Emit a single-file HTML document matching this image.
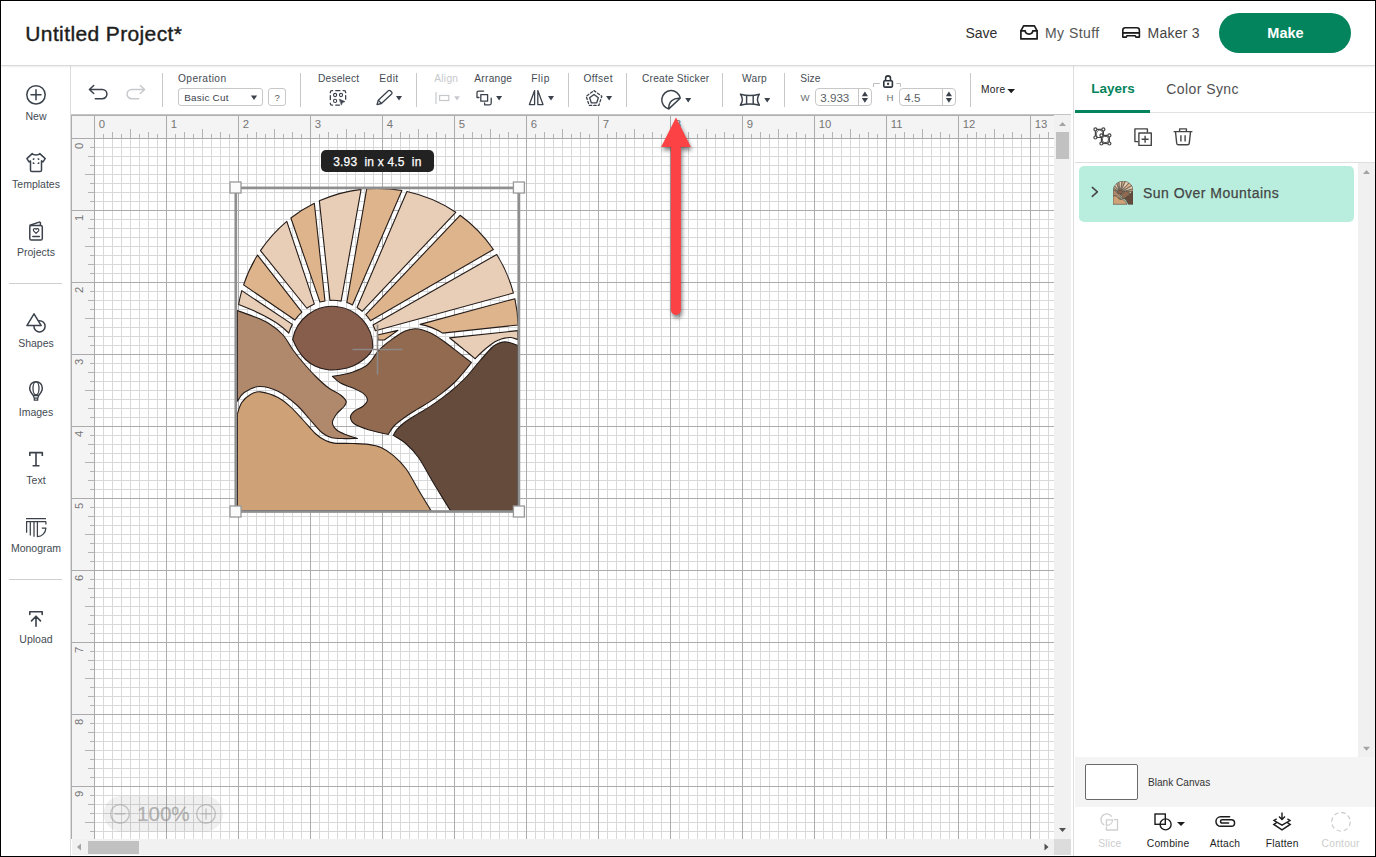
<!DOCTYPE html>
<html><head><meta charset="utf-8"><title>Design Space</title>
<style>
*{box-sizing:border-box;margin:0;padding:0}
html,body{width:1376px;height:857px;overflow:hidden;background:#fff}
body{position:relative;font-family:"Liberation Sans",sans-serif;color:#333}
.abs{position:absolute}
.t{position:absolute;white-space:nowrap;line-height:1;}
#frame{position:absolute;left:0;top:0;width:1376px;height:857px;border:1px solid #000;z-index:50;pointer-events:none}
#header{position:absolute;left:1px;top:1px;width:1374px;height:65px;background:#fff;border-bottom:1px solid #d9d9d9;box-shadow:0 1px 2px rgba(0,0,0,.07);z-index:5}
#side{position:absolute;left:1px;top:66px;width:70px;height:790px;background:#fff;border-right:1px solid #dcdcdc}
#toolbar{position:absolute;left:71px;top:66px;width:1002px;height:48px;background:#fff}
.sep{position:absolute;top:73px;width:1px;height:34px;background:#c9c9c9}
.lbl{font-size:10.5px;color:#444b53}
.dis{color:#c3c6c9}
.box{position:absolute;border:1px solid #c8c8c8;border-radius:3px;background:#fff}
#canvas{position:absolute;left:72px;top:116px;width:982px;height:723px;background-color:#fff;
 background-image:
  linear-gradient(to right,#ababab 1px,transparent 1px),
  linear-gradient(to bottom,#ababab 1px,transparent 1px),
  linear-gradient(to right,#d9d9d9 1px,transparent 1px),
  linear-gradient(to bottom,#d9d9d9 1px,transparent 1px);
 background-size:72px 72px,72px 72px,9px 9px,9px 9px;
 background-position:22px 0,0 22px,4px 0,0 4px;}
#rtop{position:absolute;left:72px;top:116px;width:982px;height:22px;background-color:#f4f4f4;
 background-image:
  linear-gradient(to right,#ababab 1px,transparent 1px),
  linear-gradient(to right,#b4b4b4 1px,transparent 1px),
  linear-gradient(to right,#b4b4b4 1px,transparent 1px),
  linear-gradient(to right,#b4b4b4 1px,transparent 1px);
 background-size:72px 22px,36px 9px,18px 6px,9px 4px;
 background-position:22px 0,22px 13px,4px 16px,4px 18px;
 background-repeat:repeat-x;}
#rleft{position:absolute;left:72px;top:116px;width:22px;height:723px;background-color:#f4f4f4;
 background-image:
  linear-gradient(to bottom,#ababab 1px,transparent 1px),
  linear-gradient(to bottom,#b4b4b4 1px,transparent 1px),
  linear-gradient(to bottom,#b4b4b4 1px,transparent 1px),
  linear-gradient(to bottom,#b4b4b4 1px,transparent 1px);
 background-size:22px 72px,9px 36px,6px 18px,4px 9px;
 background-position:0 22px,13px 22px,16px 4px,18px 4px;
 background-repeat:repeat-y;}
#rcorner{position:absolute;left:72px;top:116px;width:22px;height:22px;background:#f4f4f4}
</style></head>
<body>
<div id="header"></div>
<div class="t" style="left:25.3px;top:22.52px;font-size:21px;color:#1d1d1d;font-weight:normal;letter-spacing:0.38px;-webkit-text-stroke:0.4px #1d1d1d;z-index:6;">Untitled Project*</div>
<div class="t" style="left:965.5px;top:25.90px;font-size:14px;color:#2e2e2e;font-weight:normal;z-index:6;">Save</div>
<div class="t" style="left:1045px;top:25.90px;font-size:14px;color:#555;font-weight:normal;letter-spacing:0.45px;z-index:6;">My Stuff</div>
<div class="t" style="left:1147.5px;top:25.90px;font-size:14px;color:#444;font-weight:normal;letter-spacing:0.25px;z-index:6;">Maker 3</div>
<div class="abs" style="left:1219px;top:13px;width:132px;height:40px;border-radius:20px;background:#04845c;z-index:6"></div>
<div class="t" style="left:1267.3px;top:25.73px;font-size:14.5px;color:#fff;font-weight:bold;z-index:7;">Make</div>
<div id="side"></div>
<div class="t lbl" style="left:1px;width:70px;text-align:center;top:110.78px;font-size:10.5px">New</div>
<div class="t lbl" style="left:1px;width:70px;text-align:center;top:178.69px;font-size:10.5px">Templates</div>
<div class="t lbl" style="left:1px;width:70px;text-align:center;top:246.59px;font-size:10.5px">Projects</div>
<div class="t lbl" style="left:1px;width:70px;text-align:center;top:338.39px;font-size:10.5px">Shapes</div>
<div class="t lbl" style="left:1px;width:70px;text-align:center;top:406.79px;font-size:10.5px">Images</div>
<div class="t lbl" style="left:1px;width:70px;text-align:center;top:474.59px;font-size:10.5px">Text</div>
<div class="t lbl" style="left:1px;width:70px;text-align:center;top:542.78px;font-size:10.5px">Monogram</div>
<div class="t lbl" style="left:1px;width:70px;text-align:center;top:634.38px;font-size:10.5px">Upload</div>
<div class="abs" style="left:9px;top:283px;width:53px;height:1px;background:#cfcfcf"></div>
<div class="abs" style="left:9px;top:579px;width:53px;height:1px;background:#cfcfcf"></div>
<div id="toolbar"></div>
<div class="sep" style="left:162px"></div>
<div class="sep" style="left:300px"></div>
<div class="sep" style="left:416px"></div>
<div class="sep" style="left:568px"></div>
<div class="sep" style="left:626px"></div>
<div class="sep" style="left:722px"></div>
<div class="sep" style="left:784px"></div>
<div class="sep" style="left:970px"></div>
<div class="t" style="left:178px;top:73.77px;font-size:10.2px;color:#444b53;font-weight:normal;letter-spacing:0.42px;">Operation</div>
<div class="t" style="left:318px;top:73.77px;font-size:10.2px;color:#444b53;font-weight:normal;letter-spacing:0.2px;">Deselect</div>
<div class="t" style="left:379.3px;top:73.77px;font-size:10.2px;color:#444b53;font-weight:normal;letter-spacing:0.45px;">Edit</div>
<div class="t" style="left:474.3px;top:73.77px;font-size:10.2px;color:#444b53;font-weight:normal;letter-spacing:0.25px;">Arrange</div>
<div class="t" style="left:531.2px;top:73.77px;font-size:10.2px;color:#444b53;font-weight:normal;letter-spacing:0.6px;">Flip</div>
<div class="t" style="left:583.5px;top:73.77px;font-size:10.2px;color:#444b53;font-weight:normal;letter-spacing:0.4px;">Offset</div>
<div class="t" style="left:642px;top:73.77px;font-size:10.2px;color:#444b53;font-weight:normal;letter-spacing:0.2px;">Create Sticker</div>
<div class="t" style="left:742px;top:73.77px;font-size:10.2px;color:#444b53;font-weight:normal;letter-spacing:0.25px;">Warp</div>
<div class="t" style="left:800.3px;top:73.77px;font-size:10.2px;color:#444b53;font-weight:normal;letter-spacing:0.1px;">Size</div>
<div class="t" style="left:434.2px;top:73.77px;font-size:10.2px;color:#c6c9cc;font-weight:normal;letter-spacing:0.3px;">Align</div>
<div class="box" style="left:178px;top:88px;width:85px;height:18px"></div>
<div class="t" style="left:184.2px;top:93.22px;font-size:9.9px;color:#3b424b;font-weight:normal;letter-spacing:0.25px;">Basic Cut</div>
<div class="box" style="left:268px;top:88px;width:18px;height:18px"></div>
<div class="t" style="left:274.6px;top:93.26px;font-size:9.5px;color:#555;font-weight:normal;">?</div>
<div class="t" style="left:800.4px;top:93.29px;font-size:9.7px;color:#6a6f75;font-weight:normal;">W</div>
<div class="box" style="left:815px;top:88px;width:57px;height:18px;border-radius:4px"></div>
<div class="abs" style="left:858px;top:89px;width:1px;height:16px;background:#c8c8c8"></div>
<div class="t" style="left:820.3px;top:91.58px;font-size:11.6px;color:#5b5f64;font-weight:normal;">3.933</div>
<div class="t" style="left:886.6px;top:93.29px;font-size:9.7px;color:#6a6f75;font-weight:normal;">H</div>
<div class="box" style="left:899px;top:88px;width:57px;height:18px;border-radius:4px"></div>
<div class="abs" style="left:942px;top:89px;width:1px;height:16px;background:#c8c8c8"></div>
<div class="t" style="left:904.3px;top:91.58px;font-size:11.6px;color:#5b5f64;font-weight:normal;">4.5</div>
<div class="t" style="left:981px;top:85.27px;font-size:10.2px;color:#222;font-weight:normal;letter-spacing:0.3px;">More</div>
<div class="abs" style="left:71px;top:114px;width:1000px;height:1px;background:#c4c4c4"></div>
<div class="abs" style="left:71px;top:115px;width:983px;height:1px;background:#b0b0b0"></div>
<div class="abs" style="left:1054px;top:115px;width:17px;height:1px;background:#f1f1f1"></div>
<div class="abs" style="left:71px;top:116px;width:1px;height:723px;background:#adadad"></div>
<div id="canvas"></div>
<div id="rtop"></div><div id="rleft"></div><div id="rcorner"></div>
<div class="abs" style="left:72px;top:138px;width:982px;height:1px;background:#ababab"></div>
<div class="abs" style="left:94px;top:116px;width:1px;height:723px;background:#ababab"></div>
<svg class="abs" style="left:0;top:0" width="1376" height="857" font-family="Liberation Sans, sans-serif" font-size="11.3" fill="#757575"><text x="98.8" y="127.8">0</text><text x="170.8" y="127.8">1</text><text x="242.8" y="127.8">2</text><text x="314.8" y="127.8">3</text><text x="386.8" y="127.8">4</text><text x="458.8" y="127.8">5</text><text x="530.8" y="127.8">6</text><text x="602.8" y="127.8">7</text><text x="674.8" y="127.8">8</text><text x="746.8" y="127.8">9</text><text x="818.8" y="127.8">10</text><text x="890.8" y="127.8">11</text><text x="962.8" y="127.8">12</text><text x="1034.8" y="127.8">13</text><text transform="translate(83.2,148.9) rotate(-90)">0</text><text transform="translate(83.2,220.9) rotate(-90)">1</text><text transform="translate(83.2,292.9) rotate(-90)">2</text><text transform="translate(83.2,364.9) rotate(-90)">3</text><text transform="translate(83.2,436.9) rotate(-90)">4</text><text transform="translate(83.2,508.9) rotate(-90)">5</text><text transform="translate(83.2,580.9) rotate(-90)">6</text><text transform="translate(83.2,652.9) rotate(-90)">7</text><text transform="translate(83.2,724.9) rotate(-90)">8</text><text transform="translate(83.2,796.9) rotate(-90)">9</text></svg>
<div class="abs" style="left:1054px;top:116px;width:17px;height:723px;background:#f1f1f1"></div>
<div class="abs" style="left:1056px;top:132px;width:13px;height:27px;background:#c1c1c1"></div>
<div class="abs" style="left:72px;top:839px;width:982px;height:16px;background:#f1f1f1"></div>
<div class="abs" style="left:88px;top:841px;width:51px;height:13px;background:#c1c1c1"></div>
<div class="abs" style="left:1054px;top:839px;width:17px;height:16px;background:#dcdcdc"></div>
<div class="abs" style="left:1073px;top:66px;width:1px;height:790px;background:#dedede"></div>
<div class="t" style="left:1091.3px;top:82.37px;font-size:13.5px;color:#04845c;font-weight:bold;">Layers</div>
<div class="t" style="left:1166.3px;top:81.95px;font-size:14px;color:#505050;font-weight:normal;letter-spacing:0.42px;">Color Sync</div>
<div class="abs" style="left:1075px;top:112px;width:300px;height:1px;background:#e2e2e2"></div>
<div class="abs" style="left:1075px;top:110px;width:75px;height:3px;background:#04845c"></div>
<div class="abs" style="left:1075px;top:162px;width:300px;height:1px;background:#dedede"></div>
<div class="abs" style="left:1358px;top:163px;width:17px;height:594px;background:#f0f0f0"></div>
<div class="abs" style="left:1079px;top:166px;width:275px;height:56px;border-radius:5px;background:#b9eede"></div>
<div class="t" style="left:1143px;top:186.05px;font-size:14px;color:#454545;font-weight:normal;letter-spacing:0.48px;-webkit-text-stroke:0.25px #454545;">Sun Over Mountains</div>
<div class="abs" style="left:1075px;top:757px;width:300px;height:50px;background:#f4f4f4"></div>
<div class="abs" style="left:1085px;top:764px;width:53px;height:36px;border:1px solid #6a6a6a;border-radius:2px;background:#fff"></div>
<div class="t" style="left:1148px;top:778.35px;font-size:10.1px;color:#333;font-weight:normal;">Blank Canvas</div>
<div class="t" style="left:1098.2px;top:838.88px;font-size:10.3px;color:#cdcdcd;font-weight:normal;letter-spacing:0.2px;">Slice</div>
<div class="t" style="left:1146.8px;top:838.88px;font-size:10.3px;color:#1f1f1f;font-weight:normal;letter-spacing:0.2px;">Combine</div>
<div class="t" style="left:1209.8px;top:838.88px;font-size:10.3px;color:#1f1f1f;font-weight:normal;letter-spacing:0.2px;">Attach</div>
<div class="t" style="left:1265.8px;top:838.88px;font-size:10.3px;color:#1f1f1f;font-weight:normal;letter-spacing:0.2px;">Flatten</div>
<div class="t" style="left:1321.6px;top:838.88px;font-size:10.3px;color:#cdcdcd;font-weight:normal;letter-spacing:0.2px;">Contour</div>
<div class="abs" style="left:321px;top:150px;width:113px;height:21.5px;border-radius:5px;background:#222"></div>
<div class="t" style="left:333.2px;top:155.84px;font-size:12px;color:#fff;font-weight:normal;letter-spacing:0.2px;-webkit-text-stroke:0.25px #fff;">3.93&nbsp; in x 4.5&nbsp; in</div>
<svg class="abs" style="left:0;top:0" width="1376" height="857" viewBox="0 0 1376 857"><g><rect x="103.5" y="796" width="119.5" height="35.5" rx="17.75" fill="#000" opacity="0.06"/><g stroke="#9a9a9a" stroke-opacity="0.55" stroke-width="1.4" fill="none"><circle cx="120" cy="813.9" r="9.3"/><path d="M114.5 813.9H125.5"/><circle cx="206" cy="813.9" r="9.3"/><path d="M200.5 813.9H211.5M206 808.4V819.4"/></g><text x="137" y="821" font-family="Liberation Sans, sans-serif" font-size="20.6" fill="#8a8a8a" fill-opacity="0.58" stroke="#8a8a8a" stroke-opacity="0.3" stroke-width="0.5">100%</text></g><g stroke="#231b18" stroke-width="1.1" stroke-linejoin="round"><g id="artshapes"><path d="M243.58 284.89A140.9 140.9 0 0 1 257.53 255.08L301.93 312.10A45.5 45.5 0 0 0 294.98 320.06Z" fill="#deb48d"/><path d="M260.45 250.57A140.9 140.9 0 0 1 286.80 221.31L314.39 304.06A45.5 45.5 0 0 0 306.84 308.23Z" fill="#e8ceb7"/><path d="M290.89 218.01A140.9 140.9 0 0 1 314.33 203.26L324.96 300.93A45.5 45.5 0 0 0 319.95 302.07Z" fill="#deb48d"/><path d="M319.37 200.86A140.9 140.9 0 0 1 361.09 189.34L341.12 301.12A45.5 45.5 0 0 0 329.92 300.37Z" fill="#e8ceb7"/><path d="M366.70 188.80A140.9 140.9 0 0 1 401.90 190.56L352.45 304.91A45.5 45.5 0 0 0 346.80 302.60Z" fill="#deb48d"/><path d="M406.94 191.55A140.9 140.9 0 0 1 455.75 212.26L362.15 311.29A45.5 45.5 0 0 0 357.03 307.48Z" fill="#e8ceb7"/><path d="M460.08 215.28A140.9 140.9 0 0 1 493.39 249.45L370.42 320.65A45.5 45.5 0 0 0 365.74 314.73Z" fill="#deb48d"/><path d="M496.74 254.56A140.9 140.9 0 0 1 513.45 293.02L375.42 330.70A45.5 45.5 0 0 0 372.97 325.01Z" fill="#e8ceb7"/><path d="M241.81 290.62L292.36 324.38A45.5 45.5 0 0 0 288.79 333.16C283 326.5 270 316.5 238.62 304.40A140.9 140.9 0 0 1 241.81 290.62Z" fill="#e8ceb7"/><path d="M377.4 335L398 330.4L384.3 340L378 340A45.5 45.5 0 0 0 377.4 335Z" fill="#deb48d"/><path d="M514.84 298.70L420.1 324.4C429 326 436 329 442.6 333.1L518.13 324.98A140.9 140.9 0 0 0 514.84 298.70Z" fill="#deb48d"/><path d="M449.50 337.90L517.90 330.60L517.90 339.60C516.75 339.25 513.23 337.75 511.00 337.50C508.77 337.25 506.67 337.63 504.50 338.10C502.33 338.57 500.08 339.36 498.00 340.30C495.92 341.24 494.50 341.97 492.00 343.75C489.50 345.53 485.82 348.50 483.00 351.00C480.18 353.50 476.42 357.46 475.10 358.75C473.92 357.76 470.39 354.76 468.00 352.80C465.61 350.84 462.92 348.77 460.75 347.00C458.58 345.23 456.88 343.72 455.00 342.20C453.12 340.68 450.42 338.62 449.50 337.90Z" fill="#e8ceb7"/><path d="M292.66 339.46A40.4 40.4 0 0 1 372.80 347.10C372.38 348.05 371.93 350.65 370.30 352.80C368.67 354.95 365.88 357.80 363.00 360.00C360.12 362.20 356.75 364.45 353.00 366.00C349.25 367.55 344.67 368.67 340.50 369.30C336.33 369.93 332.17 370.32 328.00 369.80C323.83 369.28 319.25 367.92 315.50 366.20C311.75 364.48 308.42 362.20 305.50 359.50C302.58 356.80 300.14 353.34 298.00 350.00C295.86 346.66 293.55 341.21 292.66 339.46Z" fill="#875d4b"/><path d="M237.40 310.60C240.00 311.54 247.69 314.06 253.00 316.25C258.31 318.44 264.25 320.62 269.25 323.75C274.25 326.88 279.04 330.62 283.00 335.00C286.96 339.38 289.67 345.42 293.00 350.00C296.33 354.58 299.25 358.12 303.00 362.50C306.75 366.88 311.33 372.08 315.50 376.25C319.67 380.42 323.83 384.38 328.00 387.50C332.17 390.62 337.48 392.71 340.50 395.00C343.52 397.29 345.48 399.38 346.10 401.25C346.73 403.12 345.81 404.17 344.25 406.25C342.69 408.33 338.73 411.04 336.75 413.75C334.77 416.46 332.40 419.79 332.40 422.50C332.40 425.21 334.36 427.92 336.75 430.00C339.14 432.08 343.31 433.58 346.75 435.00C350.19 436.42 355.62 437.92 357.40 438.50C355.33 438.52 349.27 438.73 345.00 438.60C340.73 438.48 335.62 438.77 331.75 437.75C327.88 436.73 325.50 435.67 321.75 432.50C318.00 429.33 313.42 423.33 309.25 418.75C305.08 414.17 301.96 409.58 296.75 405.00C291.54 400.42 284.25 394.33 278.00 391.25C271.75 388.17 264.88 386.29 259.25 386.50C253.62 386.71 247.89 390.04 244.25 392.50C240.61 394.96 238.54 399.79 237.40 401.25L237.40 310.60Z" fill="#b0886b"/><path d="M332.40 376.25C334.17 375.96 339.57 375.23 343.00 374.50C346.43 373.77 349.25 373.27 353.00 371.90C356.75 370.52 362.38 368.23 365.50 366.25C368.62 364.27 369.67 362.50 371.75 360.00C373.83 357.50 375.79 353.82 378.00 351.25C380.21 348.68 382.67 346.58 385.00 344.60C387.33 342.62 388.75 341.62 392.00 339.40C395.25 337.18 400.54 333.07 404.50 331.30C408.46 329.53 411.58 328.55 415.75 328.75C419.92 328.95 425.12 330.62 429.50 332.50C433.88 334.38 437.83 337.18 442.00 340.00C446.17 342.82 449.60 345.65 454.50 349.40C459.40 353.15 468.58 360.32 471.40 362.50C470.00 364.25 465.82 369.67 463.00 373.00C460.18 376.33 458.00 379.15 454.50 382.50C451.00 385.85 446.17 389.87 442.00 393.10C437.83 396.33 433.67 399.18 429.50 401.90C425.33 404.62 421.17 406.80 417.00 409.40C412.83 412.00 408.33 414.73 404.50 417.50C400.67 420.27 396.71 423.18 394.00 426.00C391.29 428.82 389.21 433.00 388.25 434.40C386.54 434.04 381.79 433.19 378.00 432.25C374.21 431.31 369.46 430.17 365.50 428.75C361.54 427.33 356.75 425.73 354.25 423.75C351.75 421.77 350.50 418.98 350.50 416.90C350.50 414.82 352.17 413.02 354.25 411.25C356.33 409.48 360.81 408.12 363.00 406.25C365.19 404.38 367.40 402.19 367.40 400.00C367.40 397.81 365.40 395.08 363.00 393.10C360.60 391.12 356.75 389.77 353.00 388.10C349.25 386.43 343.93 385.08 340.50 383.10C337.07 381.12 333.75 377.39 332.40 376.25Z" fill="#916a50"/><path d="M393.25 435.40C393.88 434.40 395.12 431.55 397.00 429.40C398.88 427.25 401.17 425.00 404.50 422.50C407.83 420.00 412.83 417.00 417.00 414.40C421.17 411.80 425.33 409.62 429.50 406.90C433.67 404.18 437.83 401.23 442.00 398.10C446.17 394.97 450.33 391.74 454.50 388.10C458.67 384.46 462.83 380.73 467.00 376.25C471.17 371.77 475.33 366.04 479.50 361.25C483.67 356.46 488.92 350.44 492.00 347.50C495.08 344.56 495.92 344.53 498.00 343.60C500.08 342.67 502.33 342.00 504.50 341.90C506.67 341.80 508.77 342.38 511.00 343.00C513.23 343.62 516.75 345.17 517.90 345.60L517.90 510.60L450.40 510.60C449.25 508.73 446.73 504.71 443.50 499.40C440.27 494.09 435.17 485.73 431.00 478.75C426.83 471.77 422.67 463.33 418.50 457.50C414.33 451.67 410.21 447.43 406.00 443.75C401.79 440.07 395.38 436.79 393.25 435.40Z" fill="#654b3b"/><path d="M237.40 413.75C238.12 411.88 239.57 405.73 241.75 402.50C243.93 399.27 247.38 396.17 250.50 394.40C253.62 392.63 255.92 391.38 260.50 391.90C265.08 392.42 273.00 395.00 278.00 397.50C283.00 400.00 286.33 403.15 290.50 406.90C294.67 410.65 298.83 415.52 303.00 420.00C307.17 424.48 311.75 430.32 315.50 433.75C319.25 437.18 322.38 439.04 325.50 440.60C328.62 442.16 329.67 442.62 334.25 443.10C338.83 443.58 347.29 443.28 353.00 443.50C358.71 443.72 363.83 443.73 368.50 444.40C373.17 445.07 376.83 445.63 381.00 447.50C385.17 449.37 389.33 452.06 393.50 455.60C397.67 459.14 401.83 463.02 406.00 468.75C410.17 474.48 414.33 483.02 418.50 490.00C422.67 496.98 428.92 507.17 431.00 510.60L237.40 510.60L237.40 413.75Z" fill="#cfa177"/></g></g><g><rect x="235.8" y="187.9" width="283.1" height="323.6" fill="none" stroke="#8f8f8f" stroke-width="2.7"/><path d="M352.5 349.5H402.5M377.5 324.5V374.5" stroke="#8d8886" stroke-width="1.6" fill="none"/><rect x="230.0" y="182.0" width="11" height="11" fill="#fbfbfb" stroke="#999" stroke-width="1.3"/><rect x="513.4" y="182.0" width="11" height="11" fill="#fbfbfb" stroke="#999" stroke-width="1.3"/><rect x="230.0" y="506.0" width="11" height="11" fill="#fbfbfb" stroke="#999" stroke-width="1.3"/><rect x="513.4" y="506.0" width="11" height="11" fill="#fbfbfb" stroke="#999" stroke-width="1.3"/></g><defs><filter id="ash" x="-60%" y="-10%" width="220%" height="120%"><feGaussianBlur stdDeviation="2"/></filter></defs><g opacity="0.5" filter="url(#ash)" transform="translate(1.2,3.2)"><path d="M676 117.4L690.9 147H680.9V309.9a5 5 0 0 1-10 0V147H661.1Z" fill="#000"/></g><path d="M676 117.4L690.9 147H680.9V309.9a5 5 0 0 1-10 0V147H661.1Z" fill="#fc4245"/></svg>
<svg class="abs" style="left:1112.5px;top:181px" width="20.5" height="23.5" viewBox="235.5 186.5 285 326"><g stroke="#3b2b23" stroke-width="7" stroke-linejoin="round"><use href="#artshapes"/></g></svg>
<svg class="abs" style="left:0;top:0;z-index:8" width="1376" height="857" viewBox="0 0 1376 857" fill="none"><g stroke="#3b424b" stroke-width="1.5" stroke-linecap="round" stroke-linejoin="round"><circle cx="36" cy="94.85" r="9.2"/><path d="M31 94.85H41M36 89.85V99.85"/><path d="M32.2 153.6C33.5 155.4 38.5 155.4 39.8 153.6L45.2 158.6L43 161.9L41.5 160.9V170.2a1.4 1.4 0 0 1-1.4 1.4H31.9a1.4 1.4 0 0 1-1.4-1.4V160.9L29 161.9L26.9 158.6Z"/><path d="M33.3 160V158.9H34.5M37.6 158.9H38.8V160M38.8 162.3V163.4H37.6M34.5 163.4H33.3V162.3" stroke-width="1.1" stroke-linecap="butt"/><rect x="29.8" y="225.4" width="12.5" height="14.6" rx="1.6"/><path d="M30 225.3L39.2 222.1a0.9 0.9 0 0 1 1.2 0.9V225.2"/><path d="M36.1 233.4L33.6 230.9a1.45 1.45 0 0 1 2.5-1.6a1.45 1.45 0 0 1 2.5 1.6Z" stroke-width="1.2"/><path d="M32.8 236.6H39.4"/><circle cx="39.5" cy="326.3" r="5.6"/><path d="M34 313.9L41.2 325.6H26.9Z" fill="#fff"/><path d="M36 381.7c-3.7 0-6.3 2.9-6.3 6.5c0 2.6 1.6 5 3.9 7.4h4.8c2.3-2.4 3.9-4.8 3.9-7.4c0-3.6-2.6-6.5-6.3-6.5Z"/><ellipse cx="36" cy="388.3" rx="3" ry="6.5" stroke-width="1.3"/><path d="M33.2 395.6L34.3 398.2H37.7L38.8 395.6M34.3 398.2V400.2H37.7V398.2" stroke-width="1.3"/><path d="M29.8 456V452.6H42.3V456M36 452.6V465.7M32.6 465.7H39.5" stroke-width="1.6" stroke-linecap="butt"/><path d="M26 518.6H46M26 521.6H46M26.6 521.6V532.8M30.3 521.6V535.5M34 521.6V536.8M37.4 521.6V536.6C42 536.4 45.6 533 45.9 528.1H41.8M45.9 521.6V524.6" stroke-width="1.25" stroke-linecap="butt"/><path d="M29.8 614.4V611.7H42.2V614.4M36 616.2V626.3M31.5 620.9L36 616.2L40.5 620.9" stroke-width="1.6"/></g><g stroke="#3b424b" stroke-width="1.5" stroke-linecap="round" stroke-linejoin="round"><path d="M93.7 85.5L89.4 89.5L93.7 93.5M89.4 89.5H102.3A4.62 4.62 0 0 1 102.3 98.75H95.3"/><path d="M140.3 85.5L144.6 89.5L140.3 93.5M144.6 89.5H131.7A4.62 4.62 0 0 0 131.7 98.75H138.7" stroke="#c6c9cc"/></g><path d="M250.90 95.40H257.10L254.00 100.00Z" fill="#3b424b" stroke="none"/><g stroke="#3b424b" stroke-width="1.3" stroke-linecap="round" stroke-linejoin="round"><path d="M330.35 92.7V92.2A1.6 1.6 0 0 1 331.95 90.6H332.6M335.75 90.6H339.9M343.1 90.6H344.05A1.6 1.6 0 0 1 345.65 92.2V92.7M345.65 95.6V99.2M330.35 95.6V99.6M330.35 103.1V103.45A1.6 1.6 0 0 0 331.95 105.05H332.6M335.75 105.05H339.5"/><circle cx="335.1" cy="95" r="1.6" stroke-width="1.1"/><circle cx="341" cy="95" r="1.6" stroke-width="1.1"/><circle cx="335.1" cy="100.9" r="1.6" stroke-width="1.1"/><path d="M339.5 99.3L345 101.6L342.4 102.6L341.5 104.8Z" fill="#3b424b" stroke-width="0.6"/></g><g stroke="#3b424b" stroke-width="1.3" stroke-linejoin="round" stroke-linecap="round"><path d="M377 104.7L378.3 100.3L388.3 90.7a1.4 1.4 0 0 1 2 0L391.6 92a1.4 1.4 0 0 1 0 2L381.4 103.5Z"/><path d="M378.5 100.4L381.3 103.3"/></g><path d="M396.00 96.05H402.00L399.00 100.55Z" fill="#3b424b" stroke="none"/><g stroke="#c6c9cc" stroke-width="1.2"><path d="M436 92V104"/><rect x="439.6" y="95.5" width="9.2" height="5"/></g><path d="M454.20 96.20H459.80L457.00 100.40Z" fill="#c6c9cc" stroke="none"/><g stroke="#3b424b" stroke-width="1.3" stroke-linecap="round" stroke-linejoin="round"><path d="M483.6 91.1H478.5a1.5 1.5 0 0 0-1.5 1.5V97.5H479"/><path d="M491.2 98.2V103.3a1.5 1.5 0 0 1-1.5 1.5H484.6V103"/><rect x="480.8" y="94.6" width="6.8" height="6.6"/></g><path d="M496.10 96.05H502.10L499.10 100.55Z" fill="#3b424b" stroke="none"/><g stroke="#3b424b" stroke-width="1.3" stroke-linejoin="round"><path d="M534.6 90.6V104.6H529.4Z"/><path d="M537.8 90.6V104.6H543Z"/></g><path d="M548.00 96.05H554.00L551.00 100.55Z" fill="#3b424b" stroke="none"/><g stroke="#3b424b" stroke-width="1.3" stroke-linejoin="round"><path d="M594.00 94.50L598.37 97.68L596.70 102.82L591.30 102.82L589.63 97.68Z"/><path d="M594.00 90.60L601.80 96.27L598.82 105.43L589.18 105.43L586.20 96.27Z" stroke-dasharray="2.3 2.1" stroke-linejoin="round" stroke-linecap="round" stroke-width="1.3"/></g><path d="M606.10 96.05H612.10L609.10 100.55Z" fill="#3b424b" stroke="none"/><g stroke="#3b424b" stroke-width="1.5" stroke-linecap="round" stroke-linejoin="round"><path d="M680.2 98.2A9.3 9.3 0 1 0 668.8 108.9L680.2 98.2C673 97.6 668.4 102 668.8 108.9"/></g><path d="M685.20 98.05H691.20L688.20 102.55Z" fill="#3b424b" stroke="none"/><g stroke="#3b424b" stroke-width="1.45" stroke-linejoin="round"><path d="M740.4 94.2Q749.9 96.6 759.4 94.2Q755.6 99.7 759.4 105.2Q749.9 102.8 740.4 105.2Q744.2 99.7 740.4 94.2Z"/><path d="M746.6 95.4V104M753.2 95.4V104"/></g><path d="M764.20 98.05H770.20L767.20 102.55Z" fill="#3b424b" stroke="none"/><path d="M861.80 96.20H868.00L864.90 91.60Z" fill="#3b424b" stroke="none"/><path d="M861.80 98.10H868.00L864.90 102.70Z" fill="#3b424b" stroke="none"/><path d="M945.80 96.20H952.00L948.90 91.60Z" fill="#3b424b" stroke="none"/><path d="M945.80 98.10H952.00L948.90 102.70Z" fill="#3b424b" stroke="none"/><g stroke="#2e343b" stroke-width="1.6" stroke-linejoin="round"><rect x="883.8" y="80.7" width="8.6" height="6.4" rx="1"/><path d="M885.6 80.5V78.3a2.45 2.45 0 0 1 4.9 0V80.5"/><rect x="887.5" y="83" width="1.2" height="1.6" fill="#2e343b" stroke-width="0.8"/></g><path d="M873.5 87V83.5H879.8M896.3 83.5H900.4V87" stroke="#bdbdbd" stroke-width="1"/><path d="M1007.40 88.90H1015.00L1011.20 93.30Z" fill="#1c1c1c" stroke="none"/><g stroke="#1c1c1c" stroke-width="1.7" stroke-linejoin="round" stroke-linecap="round"><path d="M1020.9 30.8L1023.6 25.9H1034.4L1037.1 30.8V38.9H1020.9Z"/><path d="M1020.9 30.8H1025.2C1025.4 35.2 1032.6 35.2 1032.8 30.8H1037.1"/></g><g stroke="#1c1c1c" stroke-width="1.6" stroke-linejoin="round"><path d="M1122.8 37.1V30.2a2.5 2.5 0 0 1 2.5-2.5H1136.9a2.5 2.5 0 0 1 2.5 2.5V37.1H1135.9L1135.2 35.7H1127L1126.3 37.1Z"/><path d="M1122.8 32.9H1139.4" stroke-width="1.8"/></g><path d="M1059.00 126.00H1066.00L1062.50 122.00Z" fill="#a3a3a3" stroke="none"/><path d="M1059.00 828.00H1066.00L1062.50 832.00Z" fill="#505050" stroke="none"/><path d="M81 843.5V850.5L77 847Z" fill="#a3a3a3"/><path d="M1044.5 843.5V850.5L1048.5 847Z" fill="#505050"/><path d="M1363.00 174.00H1370.00L1366.50 170.00Z" fill="#a3a3a3" stroke="none"/><path d="M1363.00 746.80H1370.00L1366.50 750.80Z" fill="#a3a3a3" stroke="none"/><g stroke="#454545" stroke-width="1.2"><path d="M1096.9 129.4H1101.9M1095.4 130.9V136M1103.4 130.9V135.4M1096.9 137.5H1101.4"/><path d="M1097.2 136.8C1095.6 134 1096.6 130.6 1099.4 130.1C1101.6 130 1102.8 131.6 1102.9 134" stroke-width="1"/><rect x="1101.4" y="135.4" width="8" height="8.1" fill="#fff"/><rect x="1102.4" y="136.4" width="6" height="6.1" rx="2.2" stroke-width="1"/><circle cx="1095.4" cy="129.4" r="1.5" fill="#fff"/><circle cx="1103.4" cy="129.4" r="1.5" fill="#fff"/><circle cx="1095.4" cy="137.5" r="1.5" fill="#fff"/><circle cx="1101.4" cy="135.4" r="1.5" fill="#fff"/><circle cx="1109.4" cy="135.4" r="1.5" fill="#fff"/><circle cx="1101.4" cy="143.5" r="1.5" fill="#fff"/><circle cx="1109.4" cy="143.5" r="1.5" fill="#fff"/></g><g stroke="#454545" stroke-width="1.4" stroke-linejoin="round"><path d="M1138.5 141.6H1134.9V128.9H1147.4V132.6"/><rect x="1138.9" y="133" width="12.4" height="12.4" fill="#fff"/><path d="M1141.6 139.2H1148.6M1145.1 135.7V142.7"/></g><g stroke="#454545" stroke-width="1.4" stroke-linejoin="round" stroke-linecap="round"><path d="M1173.6 131.6H1192.4M1179.6 131.4V128.9H1186.4V131.4M1175.5 131.8L1176.7 143.2a1.8 1.8 0 0 0 1.8 1.6H1187.5a1.8 1.8 0 0 0 1.8-1.6L1190.5 131.8M1180.9 135.2V141.6M1185.1 135.2V141.6" stroke-linecap="butt"/></g><path d="M1092.3 187.4L1097.4 191.9L1092.3 196.4" stroke="#454545" stroke-width="1.5" stroke-linecap="round" stroke-linejoin="round"/><g stroke="#cfcfcf" stroke-width="1.3" stroke-linejoin="round"><path d="M1111.7 816.7A5.8 5.8 0 1 0 1104.3 824.9"/><path d="M1113.9 819.6H1117.5V830H1106.4V826.6"/><path d="M1106.4 819.8H1112.7C1112.5 823.1 1109.8 825.4 1106.4 825.5Z"/></g><g stroke="#1c1c1c" stroke-width="1.4"><rect x="1155" y="814" width="10.3" height="10.3" fill="#fff"/><circle cx="1165.6" cy="824.4" r="5.5"/></g><path d="M1177.00 821.90H1185.00L1181.00 826.10Z" fill="#1c1c1c" stroke="none"/><path d="M1229.6 816.8H1220.7a4.75 4.75 0 0 0 0 9.5H1231.3a3.3 3.3 0 0 0 0-6.6H1222.2a1.7 1.7 0 0 0 0 3.4H1228.6" stroke="#1c1c1c" stroke-width="1.5" stroke-linecap="round"/><g stroke="#1c1c1c" stroke-width="1.4" stroke-linejoin="miter"><path d="M1282 812.4V819.4M1279 816.6L1282 819.6L1285 816.6"/><path d="M1276.6 818.9L1274 820.5L1282 825.2L1290 820.5L1287.4 818.9"/><path d="M1276.9 822.4L1273.8 824.4L1282 829.8L1290.2 824.4L1287.1 822.4"/></g><circle cx="1341" cy="821.8" r="9.3" stroke="#cfcfcf" stroke-width="1.3" stroke-dasharray="4.4 2.9"/></svg>
<div id="frame"></div>
</body></html>
